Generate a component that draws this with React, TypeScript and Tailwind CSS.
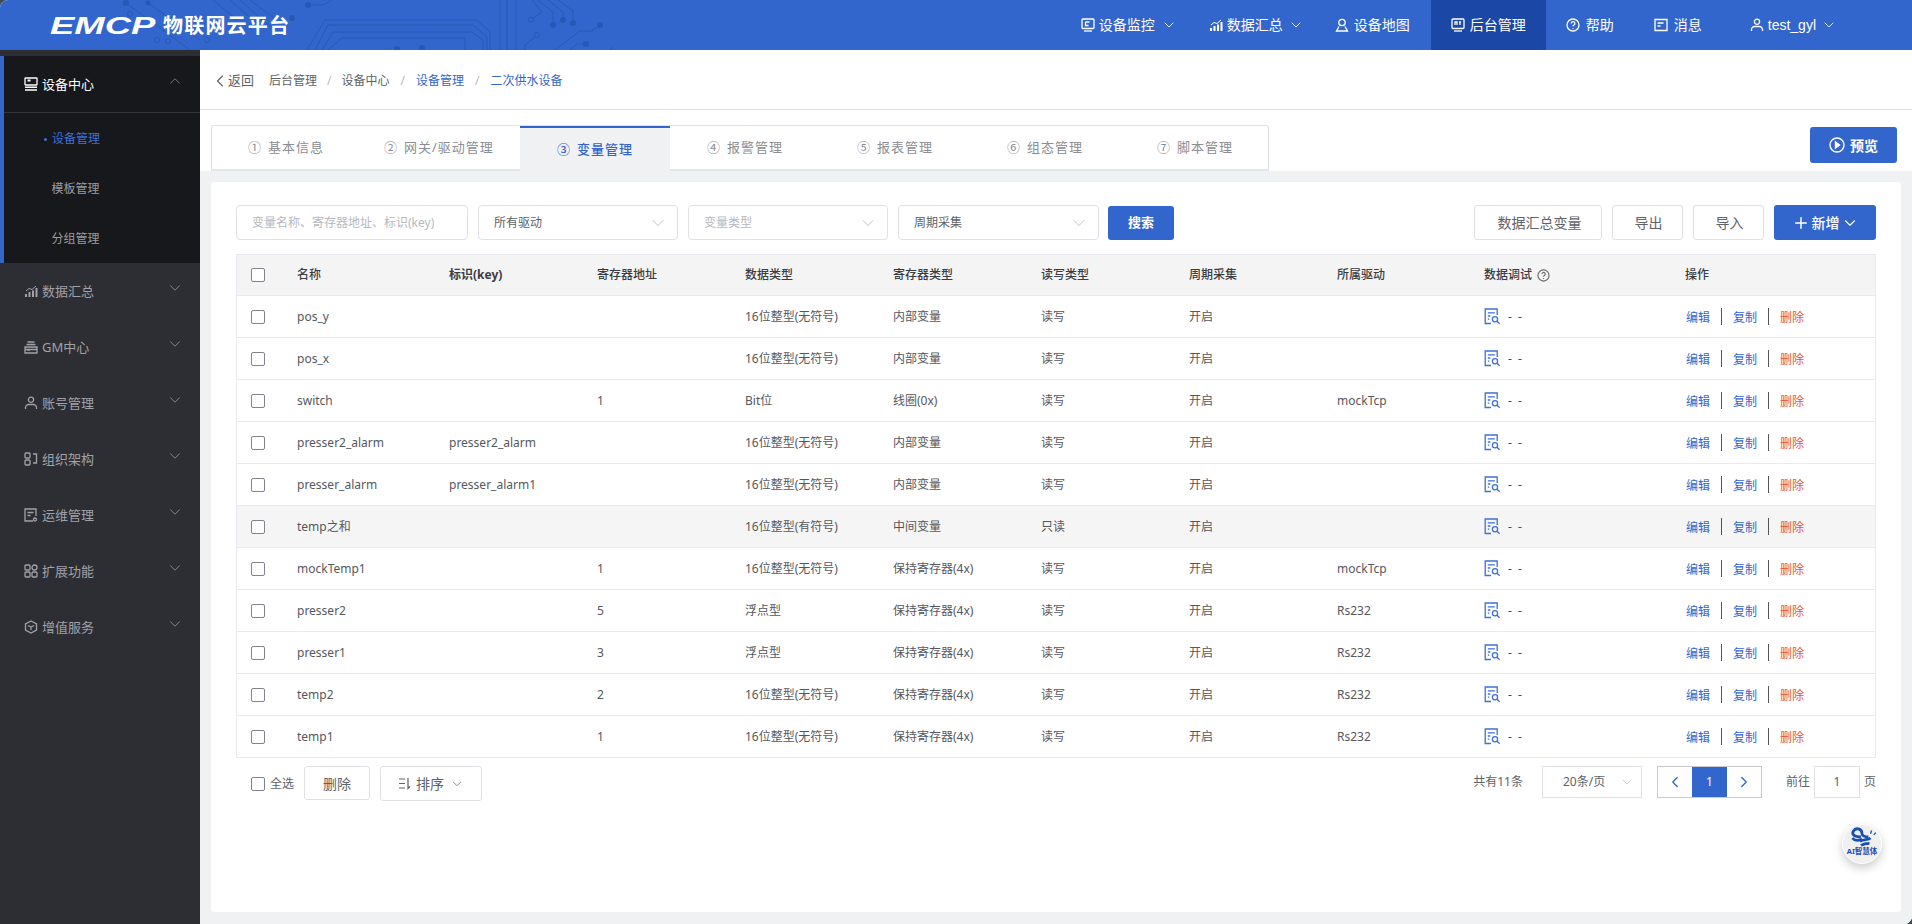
import { ChevronDown, ChevronLeft, ChevronRight, ChevronUp, Plus } from "lucide-react";
import type { ReactNode } from "react";

const gridCols = "grid grid-cols-[60px_152px_148px_148px_148px_148px_148px_148px_147px_201px_1fr]";

const rows = [
  ["pos_y", "", "", "16位整型(无符号)", "内部变量", "读写", "开启", ""],
  ["pos_x", "", "", "16位整型(无符号)", "内部变量", "读写", "开启", ""],
  ["switch", "", "1", "Bit位", "线圈(0x)", "读写", "开启", "mockTcp"],
  ["presser2_alarm", "presser2_alarm", "", "16位整型(无符号)", "内部变量", "读写", "开启", ""],
  ["presser_alarm", "presser_alarm1", "", "16位整型(无符号)", "内部变量", "读写", "开启", ""],
  ["temp之和", "", "", "16位整型(有符号)", "中间变量", "只读", "开启", ""],
  ["mockTemp1", "", "1", "16位整型(无符号)", "保持寄存器(4x)", "读写", "开启", "mockTcp"],
  ["presser2", "", "5", "浮点型", "保持寄存器(4x)", "读写", "开启", "Rs232"],
  ["presser1", "", "3", "浮点型", "保持寄存器(4x)", "读写", "开启", "Rs232"],
  ["temp2", "", "2", "16位整型(无符号)", "保持寄存器(4x)", "读写", "开启", "Rs232"],
  ["temp1", "", "1", "16位整型(无符号)", "保持寄存器(4x)", "读写", "开启", "Rs232"],
];

const Ico = ({ children, size = 14 }: { children: ReactNode; size?: number }) => (
  <svg width={size} height={size} viewBox="0 0 14 14" fill="none" stroke="currentColor" strokeWidth="1.3" className="shrink-0">
    {children}
  </svg>
);

const MonitorIcon = () => (
  <Ico>
    <rect x="1" y="1" width="12" height="9.5" rx="1" />
    <path d="M3 13h8" />
    <path d="M4.5 4h4M4.5 4v3.5h3" />
  </Ico>
);
const ChartIcon = () => (
  <Ico>
    <path d="M2 13v-3M5.5 13V8M9 13V6.5M12.5 13V4" strokeWidth="2" />
    <path d="M2 7l3-2.5 3 1 4-3.5" strokeWidth="1" />
  </Ico>
);
const PinIcon = () => (
  <Ico>
    <circle cx="7" cy="4.5" r="3.2" />
    <path d="M4 8.5L1.5 13h11L10 8.5" />
  </Ico>
);
const BoardIcon = () => (
  <Ico>
    <rect x="1" y="1" width="12" height="9.5" rx="1" />
    <path d="M3 13h8" />
    <path d="M4 7V4h2v3M8 4h2M9 4v3" />
  </Ico>
);
const HelpIcon = () => (
  <Ico>
    <circle cx="7" cy="7" r="6" />
    <path d="M5.3 5.5a1.8 1.8 0 1 1 2.6 1.6c-.6.3-.9.6-.9 1.2" />
    <path d="M7 10v.8" />
  </Ico>
);
const MsgIcon = () => (
  <Ico>
    <path d="M1 1.5h12v11H1z" />
    <path d="M3.5 5h6M3.5 8h3" />
  </Ico>
);
const UserIcon = () => (
  <Ico>
    <circle cx="7" cy="3.7" r="2.6" />
    <path d="M1.5 13v-1.5a3 3 0 0 1 3-3h5a3 3 0 0 1 3 3V13" />
  </Ico>
);
const ServerIcon = () => (
  <Ico>
    <rect x="1" y="1" width="12" height="7" rx="0.5" />
    <path d="M3.5 3.5h3" strokeWidth="2" />
    <path d="M1 10.3h12M1 13h12" strokeWidth="1.6" />
  </Ico>
);
const GmIcon = () => (
  <Ico>
    <path d="M3.5 2h7M2.5 4.5h9" />
    <path d="M1 7h12v6H1z" />
    <path d="M3 10h3M1 9.5h12" />
  </Ico>
);
const OrgIcon = () => (
  <Ico>
    <rect x="1" y="1" width="5" height="5" rx="1" />
    <rect x="1" y="8" width="5" height="5" rx="1" />
    <path d="M9 2h3.5v9H9" />
  </Ico>
);
const OpsIcon = () => (
  <Ico>
    <path d="M9 13H1V1h11v7" />
    <path d="M3.5 4.5h6M3.5 7.5h3" />
    <circle cx="11" cy="11.5" r="1.5" />
  </Ico>
);
const AppsIcon = () => (
  <Ico>
    <rect x="1" y="1" width="5" height="5" rx="1" />
    <rect x="8" y="1" width="5" height="5" rx="2.5" />
    <rect x="1" y="8" width="5" height="5" rx="1" />
    <rect x="8" y="8" width="5" height="5" rx="1" />
  </Ico>
);
const CubeIcon = () => (
  <Ico>
    <path d="M7 1l5.5 3v6L7 13 1.5 10V4z" />
    <path d="M4 5.5L7 7l3-1.5M7 7v3" />
  </Ico>
);
const DebugIcon = () => (
  <svg width="17" height="17" viewBox="0 0 17 17" fill="none" stroke="#3e70d8" strokeWidth="1.3" className="shrink-0">
    <path d="M7 15.5H1.2V1h12v6" />
    <path d="M3.8 4.8h7M3.8 8h2.5M3.8 11.2h1.5" />
    <circle cx="11" cy="11.2" r="2.6" />
    <path d="M13 13.2l2.6 2.6" />
  </svg>
);

const Circuit = () => (
  <svg width="640" height="50" viewBox="0 0 640 50" fill="none" stroke="#2858b6" strokeWidth="1" className="absolute left-0 top-0">
    <path d="M307 50l18-30h152l13 12v18M315 50l13-25h145l14 12v13M322 50l11-18h139l11 8v10M328 50l14-12h123v12" />
    <path d="M308 5h15l9-5" />
    <path d="M213 0l24 20M230 0l32 28M240 0l34 30M250 0l24 18M148 3l52 37M126 3l64 47" />
    <path d="M500 0v50M507 0v50M516 0v50" />
    <path d="M532 0l10 12-10 7M538 0l15 12v13M548 0l15 12v8M558 0l15 11v12" />
    <path d="M555 50l25-19h12l8-6M525 50v-5l10-8M570 50l7-6h9M610 50l3-3" />
    <circle cx="130" cy="14" r="2.5" />
    <circle cx="157" cy="40" r="2.5" />
    <circle cx="168" cy="41" r="2.5" />
    <circle cx="207" cy="40" r="2.5" />
    <circle cx="531" cy="19.5" r="2.5" />
    <circle cx="537" cy="35" r="2.5" />
    <g fill="#2858b6" stroke="none">
      <circle cx="126" cy="3" r="3" />
      <circle cx="148" cy="3" r="2.5" />
      <circle cx="292" cy="18" r="3" />
      <circle cx="308" cy="5" r="3" />
      <circle cx="397" cy="49" r="3" />
      <circle cx="422" cy="48" r="3" />
      <circle cx="553" cy="25" r="3" />
      <circle cx="563" cy="20" r="3" />
      <circle cx="573" cy="23" r="3" />
      <circle cx="600" cy="25" r="3" />
      <circle cx="586" cy="44" r="3" />
    </g>
  </svg>
);

const Header = () => (
  <header className="relative flex h-[50px] shrink-0 items-center bg-[#3366cc] text-white">
    <Circuit />
    <div className="relative ml-[50px] flex items-center pt-[2px]">
      <div className="w-[113px] font-['Liberation_Sans',sans-serif] text-[24px] leading-none font-bold italic">
        <span className="inline-block origin-left scale-x-[1.52]">EMCP</span>
      </div>
      <span className="text-[20px] leading-none font-bold tracking-[1.2px]">物联网云平台</span>
    </div>
    <nav className="relative ml-auto flex h-full items-center pr-[75px] text-[14px] leading-none">
      <div className="flex items-center gap-[4px]">
        <MonitorIcon />
        <span>设备监控</span>
        <ChevronDown size={16} strokeWidth={1.3} className="ml-[2px]" />
      </div>
      <div className="ml-[32px] flex items-center gap-[4px]">
        <ChartIcon />
        <span>数据汇总</span>
        <ChevronDown size={16} strokeWidth={1.3} className="ml-[1px]" />
      </div>
      <div className="ml-[31px] flex items-center gap-[5px]">
        <PinIcon />
        <span>设备地图</span>
      </div>
      <div className="ml-[21px] flex h-full w-[115px] items-center gap-[5px] bg-[#1b47a6] pl-[20px]">
        <BoardIcon />
        <span>后台管理</span>
      </div>
      <div className="ml-[20px] flex items-center gap-[6px]">
        <HelpIcon />
        <span>帮助</span>
      </div>
      <div className="ml-[40px] flex items-center gap-[6px]">
        <MsgIcon />
        <span>消息</span>
      </div>
      <div className="ml-[48px] flex items-center gap-[4px]">
        <UserIcon />
        <span className="font-['Liberation_Sans',sans-serif]">test_gyl</span>
        <ChevronDown size={16} strokeWidth={1.3} className="ml-[1px]" />
      </div>
    </nav>
  </header>
);

const SideItem = ({ icon, label }: { icon: ReactNode; label: string }) => (
  <div className="flex h-[56px] items-center pl-[24px] pr-[16px] text-[13px] text-[#a0a2a8]">
    {icon}
    <span className="ml-[4px] pt-[2px]">{label}</span>
    <ChevronDown size={18} strokeWidth={1.3} className="mb-[6px] ml-auto text-[#8a8c92]" />
  </div>
);

const Sidebar = () => (
  <aside className="w-[200px] shrink-0 bg-[#2d2e33] pt-[6px]">
    <div className="border-l-4 border-[#3366cc] bg-[#17181b]">
      <div className="flex h-[57px] items-center border-b border-[#33343a] pl-[20px] pr-[16px] text-[13px] text-white">
        <ServerIcon />
        <span className="ml-[4px] pt-[2px]">设备中心</span>
        <ChevronUp size={18} strokeWidth={1.3} className="mb-[6px] ml-auto text-[#77797f]" />
      </div>
      <div className="flex h-[50px] items-center pl-[40px] pt-[2px] text-[12px] text-[#3e70d8]">
        <span className="mr-[5px] size-[3px] rounded-full bg-[#3e70d8]" />
        设备管理
      </div>
      <div className="flex h-[50px] items-center pl-[47.5px] pt-[2px] text-[12px] text-[#9a9ca3]">模板管理</div>
      <div className="flex h-[50px] items-center pl-[47.5px] pt-[2px] text-[12px] text-[#9a9ca3]">分组管理</div>
    </div>
    <SideItem icon={<ChartIcon />} label="数据汇总" />
    <SideItem icon={<GmIcon />} label="GM中心" />
    <SideItem icon={<UserIcon />} label="账号管理" />
    <SideItem icon={<OrgIcon />} label="组织架构" />
    <SideItem icon={<OpsIcon />} label="运维管理" />
    <SideItem icon={<AppsIcon />} label="扩展功能" />
    <SideItem icon={<CubeIcon />} label="增值服务" />
  </aside>
);

const Breadcrumb = () => (
  <div className="flex h-[60px] shrink-0 items-center border-b border-[#dcdfe6] pl-[10px] pt-[2px] text-[12px] text-[#606266]">
    <ChevronLeft size={20} strokeWidth={1.4} />
    <span className="ml-[-2px] text-[13px]">返回</span>
    <span className="ml-[15px]">后台管理</span>
    <span className="mx-[10px] text-[#b4b8c0]">/</span>
    <span>设备中心</span>
    <span className="mx-[11px] text-[#b4b8c0]">/</span>
    <span className="text-[#3366cc]">设备管理</span>
    <span className="mx-[11px] text-[#b4b8c0]">/</span>
    <span className="text-[#3366cc]">二次供水设备</span>
  </div>
);

const Tab = ({ n, label, width, active }: { n: string; label: string; width: string; active?: boolean }) => (
  <div
    className={
      width +
      " flex items-center gap-[6px] pl-[37px] first:pl-[36px] text-[13px] tracking-[1px] " +
      (active ? "h-[calc(100%+2px)] border-t-2 border-[#3366cc] bg-[#f0f1f3] font-medium text-[#3366cc]" : "h-full text-[#8a8d93]")
    }
  >
    <span>{n}</span>
    <span>{label}</span>
  </div>
);

const Tabs = () => (
  <div className="flex h-[61px] shrink-0 items-start justify-between bg-white pl-[11px] pr-[15px] pt-[15px]">
    <div className="flex h-[46px] w-[1058px] rounded-t-[3px] border border-b-2 border-[#dfe1e8] border-b-[#e4e5ea] bg-white">
      <Tab n="①" label="基本信息" width="w-[135px]" />
      <Tab n="②" label="网关/驱动管理" width="w-[173px]" />
      <Tab n="③" label="变量管理" width="w-[150px]" active />
      <Tab n="④" label="报警管理" width="w-[150px]" />
      <Tab n="⑤" label="报表管理" width="w-[150px]" />
      <Tab n="⑥" label="组态管理" width="w-[150px]" />
      <Tab n="⑦" label="脚本管理" width="w-[148px]" />
    </div>
    <button className="mt-[2px] flex h-[36px] w-[87px] items-center justify-center gap-[5px] rounded-[3px] bg-[#3366cc] text-[14px] font-bold text-white">
      <svg width="16" height="16" viewBox="0 0 16 16" fill="none" stroke="white" strokeWidth="1.4">
        <circle cx="8" cy="8" r="7" />
        <path d="M6.5 5v6l4-3z" fill="white" />
      </svg>
      预览
    </button>
  </div>
);

const Box = ({ children, width, muted }: { children: ReactNode; width: string; muted?: boolean }) => (
  <div
    className={
      width +
      " flex h-[35px] items-center justify-between rounded-[4px] border border-[#dfe1e8] bg-white pl-[15px] pr-[9px] text-[12px] " +
      (muted ? "text-[#b6b9c0]" : "text-[#606266]")
    }
  >
    <span>{children}</span>
    <ChevronDown size={20} strokeWidth={1} className="text-[#b6b9c0]" />
  </div>
);

const Filters = () => (
  <div className="flex items-center">
    <div className="flex h-[35px] w-[232px] items-center rounded-[4px] border border-[#dfe1e8] bg-white pl-[15px] text-[12px] text-[#b6b9c0]">
      变量名称、寄存器地址、标识(key)
    </div>
    <div className="ml-[10px] flex gap-[10px]">
      <Box width="w-[200px]">所有驱动</Box>
      <Box width="w-[200px]" muted>
        变量类型
      </Box>
      <Box width="w-[201px]">周期采集</Box>
    </div>
    <button className="ml-[9px] h-[34px] w-[66px] rounded-[3px] bg-[#3366cc] text-[13px] font-bold text-white">搜索</button>
    <div className="ml-auto flex items-center gap-[10px] text-[14px] text-[#606266]">
      <button className="h-[35px] w-[128px] rounded-[3px] border border-[#dfe1e8] bg-white pl-[3px]">数据汇总变量</button>
      <button className="h-[35px] w-[71px] rounded-[3px] border border-[#dfe1e8] bg-white pl-[2px]">导出</button>
      <button className="h-[35px] w-[71px] rounded-[3px] border border-[#dfe1e8] bg-white pl-[2px]">导入</button>
      <button className="flex h-[35px] w-[102px] items-center justify-center rounded-[3px] bg-[#3366cc] font-medium text-white">
        <Plus size={18} strokeWidth={2} className="mr-[2px]" />
        新增
        <ChevronDown size={18} strokeWidth={1.5} className="ml-[1px]" />
      </button>
    </div>
  </div>
);

const Check = () => <span className="block size-[14px] rounded-[2px] border border-[#80838c] bg-white" />;

const Table = () => (
  <div className="mt-[14px] border-x border-t border-[#e8eaef] text-[12px]">
    <div className={gridCols + " h-[41px] items-center border-b border-[#e8eaef] bg-[#f4f4f5] font-medium text-[#3a3c42]"}>
      <div className="pl-[14px]">
        <Check />
      </div>
      <div>名称</div>
      <div className="font-bold">标识(key)</div>
      <div>寄存器地址</div>
      <div>数据类型</div>
      <div>寄存器类型</div>
      <div>读写类型</div>
      <div>周期采集</div>
      <div>所属驱动</div>
      <div className="flex items-center gap-[5px]">
        数据调试
        <svg width="13" height="13" viewBox="0 0 14 14" fill="none" stroke="#666" strokeWidth="1.2">
          <circle cx="7" cy="7" r="6" />
          <path d="M5.3 5.5a1.8 1.8 0 1 1 2.6 1.6c-.6.3-.9.6-.9 1.2M7 10v.8" />
        </svg>
      </div>
      <div>操作</div>
    </div>
    {rows.map((row, i) => (
      <div
        key={row[0]}
        className={gridCols + " h-[42px] items-center border-b border-[#e8eaef] text-[#55575d] " + (i === 5 ? "bg-[#f5f5f5]" : "bg-white")}
      >
        <div className="pl-[14px]">
          <Check />
        </div>
        {row.map((cell, c) => (
          <div key={c}>{cell}</div>
        ))}
        <div className="flex items-center gap-[7px] text-[#444]">
          <DebugIcon />
          <span className="tracking-[1.5px]">- -</span>
        </div>
        <div className="flex items-center pl-[1px]">
          <span className="pt-[2px] text-[#3366cc]">编辑</span>
          <span className="mx-[11px] h-[17px] w-px bg-[#555]" />
          <span className="pt-[2px] text-[#3366cc]">复制</span>
          <span className="mx-[11px] h-[17px] w-px bg-[#555]" />
          <span className="pt-[2px] text-[#e0524a]">删除</span>
        </div>
      </div>
    ))}
  </div>
);

const Footer = () => (
  <div className="mt-[8px] flex items-start text-[12px] text-[#606266]">
    <div className="flex h-[35px] items-center pl-[15px]">
      <Check />
      <span className="ml-[5px]">全选</span>
    </div>
    <button className="ml-[10px] h-[34px] w-[66px] rounded-[3px] border border-[#dfe1e8] text-[14px]">删除</button>
    <button className="ml-[10px] flex h-[35px] w-[102px] items-center justify-center rounded-[3px] border border-[#dfe1e8] text-[14px]">
      <svg width="13" height="13" viewBox="0 0 13 13" fill="none" stroke="#606266" strokeWidth="1.2" className="mr-[5px]">
        <path d="M1 2h6M1 6.5h6M1 11h6M10 1v10.5l2-2" />
      </svg>
      排序
      <ChevronDown size={14} strokeWidth={1.2} className="ml-[6px]" />
    </button>
    <div className="ml-auto flex h-[32px] items-center">
      <span className="mr-[19px]">共有11条</span>
      <div className="flex h-[32px] w-[100px] items-center justify-between border border-[#dfe1e8] pl-[20px] pr-[6px]">
        20条/页
        <ChevronDown size={16} strokeWidth={1} className="text-[#b6b9c0]" />
      </div>
      <div className="ml-[15px] flex h-[32px] border border-[#c8cad0]">
        <div className="flex w-[34px] items-center justify-center text-[#3366cc]">
          <ChevronLeft size={18} strokeWidth={1.8} />
        </div>
        <div className="flex w-[35px] items-center justify-center bg-[#3366cc] text-white">1</div>
        <div className="flex w-[34px] items-center justify-center text-[#3366cc]">
          <ChevronRight size={18} strokeWidth={1.8} />
        </div>
      </div>
      <span className="ml-[24px]">前往</span>
      <div className="ml-[4px] flex h-[32px] w-[46px] items-center justify-center border border-[#dfe1e8]">1</div>
      <span className="ml-[4px]">页</span>
    </div>
  </div>
);

const AiBadge = () => (
  <div className="absolute right-[19px] top-[642px] flex size-[40px] flex-col items-center rounded-full border border-white bg-[#f0f0f0] pt-[2px] shadow-[0_4px_10px_rgba(0,0,0,0.2)]">
    <svg width="32" height="23" viewBox="0 0 30 21" fill="none" stroke="#1a4fb5" strokeWidth="2.6">
      <path d="M14 9C8 9 5 7 7 3.5S15 1 15 6c0 2 3 3 6 3" />
      <path d="M6 10c3 4 7 2 9 1M13 13c4-2 8-1 10-3M14 17c3-2 6-2 8-2" />
      <path d="M23 6l1-3M26 7l2-2" strokeWidth="1.2" />
    </svg>
    <span className="mt-[-3px] whitespace-nowrap text-[7.5px] font-bold leading-[9px] text-[#1a4fb5]">AI智慧体</span>
  </div>
);

export default function App() {
  return (
    <div className="h-[924px] w-[1912px] overflow-hidden bg-[#3f4a55] font-['Noto_Sans','Noto_Sans_CJK_SC',sans-serif]">
      <div className="flex h-full flex-col overflow-hidden rounded-tl-lg rounded-br-lg bg-[#f0f1f3]">
        <Header />
        <div className="flex min-h-0 flex-1">
          <Sidebar />
          <main className="flex min-w-0 flex-1 flex-col bg-white">
            <Breadcrumb />
            <Tabs />
            <div className="flex-1 bg-[#f0f1f3] pb-[12px] pl-[11px] pr-[11px] pt-[11px]">
              <div className="relative h-full rounded-[3px] bg-white px-[25px] pt-[23px]">
                <Filters />
                <Table />
                <Footer />
                <AiBadge />
              </div>
            </div>
          </main>
        </div>
      </div>
    </div>
  );
}
